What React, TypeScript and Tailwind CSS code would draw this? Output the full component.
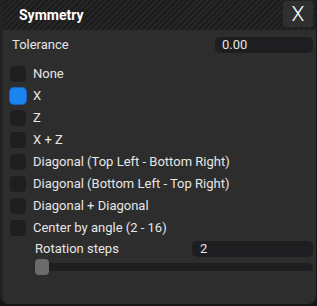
import { useState } from "react";

const OPTIONS = [
  "None",
  "X",
  "Z",
  "X + Z",
  "Diagonal (Top Left - Bottom Right)",
  "Diagonal (Bottom Left - Top Right)",
  "Diagonal + Diagonal",
  "Center by angle (2 - 16)",
];

export default function App() {
  const [selected, setSelected] = useState(1);

  return (
    <div className="w-[317px] h-[306px] bg-[#161616] font-['Roboto',sans-serif] text-[13px] text-[#e6e6e6]">
      <div className="w-[316px] h-[304px] flex flex-col rounded-b-[8px] overflow-hidden bg-[#2d2d2d] border-l-[3px] border-[#222]">
        {/* header */}
        <div className="h-[30px] flex items-center justify-between pl-[16px] pr-[3px] bg-[repeating-linear-gradient(135deg,#262626_0px,#262626_2px,#1c1c1c_2px,#1c1c1c_4px)]">
          <span className="text-[14px] font-bold text-white">Symmetry</span>
          <button className="w-[30px] h-[26px] mt-[-2px] flex items-center justify-center rounded-[3px] bg-[#2f2f2f] text-[21px] font-light leading-none text-white">
            X
          </button>
        </div>

        {/* tolerance */}
        <div className="flex items-center justify-between pl-[9px] pr-[3px] pt-[4px] h-[26px]">
          <span>Tolerance</span>
          <div className="w-[98px] h-[16px] rounded-[5px] bg-[#1e1e21] pl-[7px] flex items-center text-[13px]">0.00</div>
        </div>

        {/* options */}
        <div className="flex flex-col pl-[7px] pt-[7px]">
          {OPTIONS.map((label, i) => (
            <button
              key={label}
              onClick={() => setSelected(i)}
              className="h-[22px] flex items-center gap-[7px] text-left"
            >
              <span
                className={
                  i === selected
                    ? "w-[16px] h-[16px] rounded-[4px] bg-[#1a84f2] shadow-[0_0_0_1px_#1565c0]"
                    : "w-[16px] h-[16px] rounded-[4px] bg-[#1f1f22]"
                }
              />
              <span>{label}</span>
            </button>
          ))}
        </div>

        {/* rotation steps */}
        <div className="flex flex-col pl-[32px] pr-[3px] pt-[1px]">
          <div className="flex items-center justify-between h-[18px]">
            <span>Rotation steps</span>
            <div className="w-[121px] h-[16px] rounded-[5px] bg-[#1e1e21] pl-[8px] flex items-center">2</div>
          </div>
          <div className="relative mt-[5px] h-[8px] rounded-[4px] bg-[#1e1e21]">
            <div className="absolute left-0 top-[-4px] w-[14px] h-[16px] rounded-[4px] bg-[#6b6b6b]" />
          </div>
        </div>
      </div>
    </div>
  );
}
